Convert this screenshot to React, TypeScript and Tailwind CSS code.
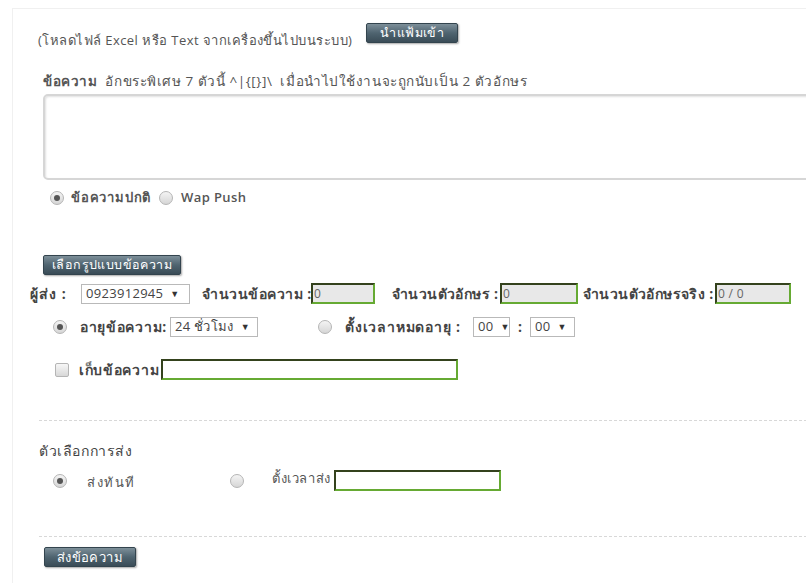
import React from "react";

const font = { fontFamily: '"Open Sans", Tahoma, "Noto Sans", sans-serif' };

function DarkButton({ label, className = "" }: { label: string; className?: string }) {
  return (
    <button
      className={`h-[20px] rounded-[2px] border border-[#33444e] bg-gradient-to-b from-[#7d8f99] via-[#4f6470] to-[#3a4c57] px-2 text-[12.5px] leading-[18px] tracking-[0.4px] text-white shadow-[1px_1px_2px_rgba(0,0,0,0.35)] ${className}`}
    >
      {label}
    </button>
  );
}

function Radio({ checked }: { checked?: boolean }) {
  return (
    <span className="inline-flex h-[14px] w-[14px] shrink-0 items-center justify-center rounded-full border border-[#b5b5b5] bg-gradient-to-b from-[#f4f4f4] to-[#d6d6d6]">
      {checked && <span className="h-[6px] w-[6px] rounded-full bg-[#555]" />}
    </span>
  );
}

function Select({ value, className = "" }: { value: string; className?: string }) {
  return (
    <span
      className={`inline-flex h-[20px] shrink-0 items-center border border-[#b9b9b9] bg-white px-[4px] text-[13px] font-normal tracking-[0.3px] text-[#444] ${className}`}
    >
      <span>{value}</span>
      <span className="ml-[7px] text-[9px] text-[#333]">▼</span>
    </span>
  );
}

function GreenInput({ value = "", className = "" }: { value?: string; className?: string }) {
  return (
    <span
      className={`inline-flex h-[21px] shrink-0 items-center border-2 border-[#66aa33] border-l-[#34421d] border-t-[#34421d] pl-[1px] text-[12px] font-normal text-[#666] ${className}`}
    >
      {value}
    </span>
  );
}

function Label({ text, className = "" }: { text: string; className?: string }) {
  return <span className={`shrink-0 whitespace-nowrap ${className}`}>{text}</span>;
}

export default function App() {
  return (
    <div className="h-[586px] w-[806px] overflow-hidden bg-white" style={font}>
      <div className="ml-[12px] mt-[8px] h-[575px] w-[820px] border-l border-t border-[#f0f0f0] pt-[14px] text-[13px] tracking-[0.3px]">
        {/* upload row */}
        <div className="flex items-start pl-[25px]">
          <span className="mt-[8px] tracking-[0.45px] text-[#555]">(โหลดไฟล์ Excel หรือ Text จากเครื่องขึ้นไปบนระบบ)</span>
          <DarkButton label="นำแฟ้มเข้า" className="ml-[14px] w-[92px]" />
        </div>

        {/* message */}
        <div className="mt-[20px] pl-[30px] text-[13.5px] tracking-[0.55px] text-[#555]">
          <span className="font-bold">ข้อความ</span>&nbsp; อักขระพิเศษ 7 ตัวนี้ ^|{"{[}]"}\&nbsp; เมื่อนำไปใช้งานจะถูกนับเป็น 2 ตัวอักษร
        </div>
        <div className="ml-[30px] mt-[3px] h-[86px] w-[800px] rounded-l-[5px] border-2 border-[#d6d6d6] shadow-[inset_1px_1px_2px_rgba(0,0,0,0.12)]" />

        <div className="mt-[8px] flex items-center pl-[37px] text-[13px] text-[#555]">
          <Radio checked />
          <Label text="ข้อความปกติ" className="ml-[7px] w-[88px] font-semibold tracking-[0.8px]" />
          <Radio />
          <Label text="Wap Push" className="ml-[8px] font-semibold tracking-[0.4px]" />
        </div>

        {/* format */}
        <div className="mt-[48px] pl-[30px]">
          <DarkButton label="เลือกรูปแบบข้อความ" className="w-[138px]" />
        </div>

        <div className="mt-[8px] flex items-center pl-[17px] text-[14px] font-bold text-[#444]">
          <Label text="ผู้ส่ง :" className="w-[51px] tracking-[1px]" />
          <Select value="0923912945" className="w-[109px]" />
          <Label text="จำนวนข้อความ :" className="w-[121px] pl-[12px] tracking-[0.5px]" />
          <GreenInput value="0" className="w-[64px] bg-[#e8e8e8]" />
          <Label text="จำนวนตัวอักษร :" className="w-[125px] pl-[17px] tracking-[0.4px]" />
          <GreenInput value="0" className="w-[78px] bg-[#e8e8e8]" />
          <Label text="จำนวนตัวอักษรจริง :" className="w-[137px] pl-[5px] tracking-[0.4px]" />
          <GreenInput value="0 / 0" className="w-[76px] bg-[#e8e8e8]" />
        </div>

        <div className="mt-[12px] flex items-center pl-[40px] text-[14px] font-bold text-[#444]">
          <Radio checked />
          <Label text="อายุข้อความ:" className="w-[103px] pl-[13px] tracking-[0.7px]" />
          <Select value="24 ชั่วโมง" className="w-[88px]" />
          <span className="w-[60px] shrink-0" />
          <Radio />
          <Label text="ตั้งเวลาหมดอายุ :" className="w-[141px] pl-[13px] tracking-[0.8px]" />
          <Select value="00" className="w-[37px]" />
          <Label text=":" className="w-[20px] pl-[8px]" />
          <Select value="00" className="w-[45px]" />
        </div>

        <div className="mt-[22px] flex items-center pl-[42px] text-[14px] font-bold text-[#444]">
          <span className="h-[14px] w-[14px] shrink-0 rounded-[2px] border border-[#b5b5b5] bg-gradient-to-b from-[#f7f7f7] to-[#d8d8d8]" />
          <Label text="เก็บข้อความ" className="w-[92px] pl-[10px] tracking-[0.7px]" />
          <GreenInput className="w-[297px] bg-white" />
        </div>

        <div className="ml-[26px] mt-[40px] border-t border-dashed border-[#d8d8d8]" />

        {/* send options */}
        <div className="mt-[19px] pl-[26px] text-[14px] tracking-[0.6px] text-[#444]">ตัวเลือกการส่ง</div>
        <div className="mt-[7px] flex items-center pl-[40px] text-[13px] text-[#555]">
          <Radio checked />
          <Label text="ส่งทันที" className="mt-[5px] w-[163px] pl-[20px] tracking-[1.6px]" />
          <Radio />
          <Label text="ตั้งเวลาส่ง" className="-mt-[4px] w-[90px] pl-[28px] tracking-[0.6px]" />
          <GreenInput className="w-[167px] bg-white" />
        </div>

        <div className="ml-[26px] mt-[43px] border-t border-dashed border-[#d8d8d8]" />

        <div className="mt-[10px] pl-[31px]">
          <DarkButton label="ส่งข้อความ" className="w-[92px] text-[13px]" />
        </div>
      </div>
    </div>
  );
}
